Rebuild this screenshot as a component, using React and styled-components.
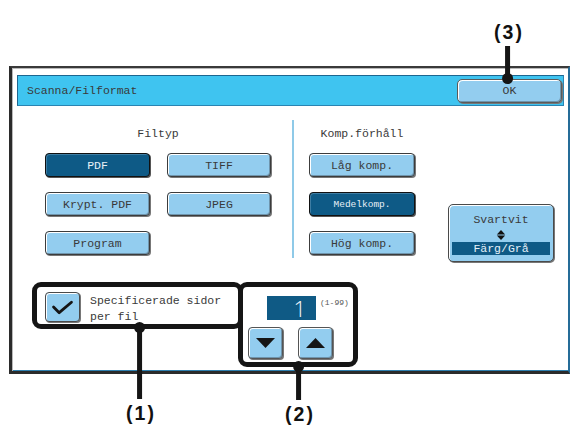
import React from "react";
import styled, { createGlobalStyle } from "styled-components";

const GlobalStyle = createGlobalStyle`
  body {
    margin: 0;
    background: #ffffff;
  }
`;

const mono = `"Liberation Mono", "DejaVu Sans Mono", monospace`;

const Page = styled.div`
  width: 571px;
  height: 427px;
  box-sizing: border-box;
  padding: 66px 1px 0 9px;
  overflow: hidden;
  font-family: ${mono};
`;

const Frame = styled.div`
  position: relative;
  width: 561px;
  height: 308px;
  box-sizing: border-box;
  border-top: 2px solid #3a3a3a;
  border-left: 3px solid #2b2b2b;
  border-right: 2px solid #256c98;
  border-bottom: 3px solid #2b2b2b;
  box-shadow: inset 1px 1px 0 #b9b9b9, inset 0 -1px 0 #2e7fae;
  background: #fff;
`;

const Header = styled.div`
  margin: 7px 4px 0 5px;
  height: 31px;
  box-sizing: border-box;
  display: flex;
  align-items: center;
  justify-content: space-between;
  background: #3fc4f0;
  border: 1px solid #2a84b2;
  border-top-color: #1d6690;
  border-left-color: #1d6690;
`;

const Title = styled.span`
  padding-left: 9px;
  font-size: 11.5px;
  color: #3a3a3a;
`;

const Key = styled.div`
  position: relative;
  box-sizing: border-box;
  width: ${(p) => p.$w || 105}px;
  height: ${(p) => p.$h || 24}px;
  display: flex;
  align-items: center;
  justify-content: center;
  border-radius: 4px;
  font-family: ${mono};
  font-size: ${(p) => p.$fs || 11.5}px;
  border: 1px solid ${(p) => (p.$on ? "#111" : "#3c3c3c")};
  background: ${(p) => (p.$on ? "#0e5a86" : "#93cdef")};
  color: ${(p) => (p.$on ? "#e8f0f6" : "#3a3a3a")};
  box-shadow: ${(p) =>
    p.$on
      ? "inset 1px 1px 0 #3e7da3, 1px 1px 0 #555"
      : "inset 1px 1px 0 #ffffff, inset -1px -1px 0 #6f95ad, 1px 1px 0 #777"};
`;

const OkKey = styled(Key)`
  margin-right: 1px;
  border-color: #5a5a5a;
  border-radius: 5px;
`;

const Body = styled.div`
  display: flex;
  align-items: flex-start;
  margin-top: 14px;
  padding-left: 33px;
`;

const Column = styled.div`
  display: flex;
  flex-direction: column;
  align-items: center;
  width: ${(p) => p.$w}px;
  margin-left: ${(p) => p.$ml || 0}px;
  padding-top: 7px;
`;

const Label = styled.div`
  font-size: 11.5px;
  line-height: 14px;
  color: #3a3a3a;
  margin-bottom: 12px;
`;

const TypeGrid = styled.div`
  display: grid;
  grid-template-columns: 105px 104px;
  grid-auto-rows: 24px;
  column-gap: 17px;
  row-gap: 15px;
`;

const KeyStack = styled.div`
  display: flex;
  flex-direction: column;
  gap: 15px;
`;

const Divider = styled.div`
  width: 2px;
  height: 138px;
  margin-left: 21px;
  background: #8fcae8;
`;

const ToggleKey = styled.div`
  box-sizing: border-box;
  width: 106px;
  height: 58px;
  margin: 84px 0 0 33px;
  padding: 3px 3px 6px;
  display: flex;
  flex-direction: column;
  align-items: stretch;
  border: 1px solid #4a4a4a;
  border-radius: 5px;
  background: #93cdef;
  box-shadow: inset 1px 1px 0 #fff, 1px 1px 0 #777;
  font-size: 11.5px;
  color: #3a3a3a;
`;

const ToggleTop = styled.div`
  text-align: center;
  line-height: 14px;
  margin-top: 5px;
`;

const ToggleArrows = styled.svg`
  display: block;
  margin: 3px auto 2px;
`;

const ToggleBand = styled.div`
  background: #0e5a86;
  color: #e4f0f8;
  text-align: center;
  line-height: 13px;
  height: 13px;
`;

const BottomRow = styled.div`
  display: flex;
  align-items: flex-start;
  margin-top: 20px;
  padding-left: 20px;
`;

const CalloutBox = styled.div`
  position: relative;
  box-sizing: border-box;
  width: ${(p) => p.$w}px;
  height: ${(p) => p.$h}px;
  margin-left: ${(p) => p.$ml || 0}px;
  border: 5px solid #151515;
  border-radius: 9px;
  background: #fff;
`;

const CheckRow = styled.div`
  display: flex;
  align-items: flex-start;
  gap: 10px;
  padding: 5px 0 0 8px;
`;

const CheckBox = styled.div`
  box-sizing: border-box;
  width: 35px;
  height: 30px;
  border: 1px solid #4a4a4a;
  border-radius: 4px;
  background: #93cdef;
  box-shadow: inset 1px 1px 0 #fff, 1px 1px 0 #777;
  display: flex;
  align-items: center;
  justify-content: center;
`;

const CheckText = styled.div`
  font-size: 11.5px;
  line-height: 16px;
  color: #3a3a3a;
  padding-top: 1px;
`;

const Spinner = styled.div`
  display: flex;
  flex-direction: column;
  padding: 9px 0 0 5px;
  gap: 7px;
`;

const ValueRow = styled.div`
  display: flex;
  align-items: flex-start;
  padding-left: 19px;
  gap: 4px;
`;

const ValueField = styled.div`
  box-sizing: border-box;
  width: 49px;
  height: 24px;
  background: #0f5a85;
  color: #f2f6fa;
  font-family: "Open Sans", "Liberation Sans", sans-serif;
  font-weight: 300;
  font-size: 22px;
  line-height: 24px;
  text-align: right;
  padding-right: 10px;
`;

const Range = styled.span`
  font-size: 8px;
  color: #555;
  margin-top: 2px;
`;

const ArrowRow = styled.div`
  display: flex;
  gap: 15px;
`;

const ArrowKey = styled(Key)`
  border-color: #555;
`;

const Marker = styled.div`
  position: absolute;
  left: ${(p) => p.$x}px;
  ${(p) => (p.$up ? `bottom: ${p.$y}px;` : `top: ${p.$y}px;`)}
  transform: translateX(-50%);
  display: flex;
  flex-direction: ${(p) => (p.$up ? "column-reverse" : "column")};
  align-items: center;
  z-index: 2;
`;

const Dot = styled.span`
  width: 11px;
  height: 11px;
  border-radius: 50%;
  background: #151515;
`;

const Stem = styled.span`
  width: 5px;
  height: ${(p) => p.$len}px;
  background: #151515;
  margin: -2px 0;
`;

const CalloutNum = styled.span`
  font-family: "Liberation Sans", Arial, sans-serif;
  font-weight: bold;
  font-size: 19.5px;
  line-height: 20px;
  letter-spacing: 2px;
  padding-left: 2px;
  color: #111;
  margin: ${(p) => (p.$up ? "0 0 6px" : "6px 0 0")};
`;

const Callout = ({ x, y, len, up, n }) => (
  <Marker $x={x} $y={y} $up={up}>
    <Dot />
    <Stem $len={len} />
    <CalloutNum $up={up}>({n})</CalloutNum>
  </Marker>
);

const fileTypes = [
  { label: "PDF", on: true },
  { label: "TIFF" },
  { label: "Krypt. PDF" },
  { label: "JPEG" },
  { label: "Program" },
];

const ratios = [
  { label: "Låg komp." },
  { label: "Medelkomp.", on: true, fs: 9.5 },
  { label: "Hög komp." },
];

const App = () => (
  <Page>
    <GlobalStyle />
    <Frame>
      <Header>
        <Title>Scanna/Filformat</Title>
        <OkKey>
          OK
          <Callout x={50} y={18} len={29} up n={3} />
        </OkKey>
      </Header>

      <Body>
        <Column $w={226}>
          <Label>Filtyp</Label>
          <TypeGrid>
            {fileTypes.map((t) => (
              <Key key={t.label} $on={t.on} $w={t.label === "TIFF" || t.label === "JPEG" ? 104 : 105}>
                {t.label}
              </Key>
            ))}
          </TypeGrid>
        </Column>
        <Divider />
        <Column $w={106} $ml={15}>
          <Label>Komp.förhåll</Label>
          <KeyStack>
            {ratios.map((r) => (
              <Key key={r.label} $on={r.on} $w={106} $fs={r.fs}>
                {r.label}
              </Key>
            ))}
          </KeyStack>
        </Column>
        <ToggleKey>
          <ToggleTop>Svartvit</ToggleTop>
          <ToggleArrows width="10" height="12" viewBox="0 0 10 12">
            <polygon points="0,5.5 5,0 10,5.5" fill="#111" />
            <polygon points="0,6.5 5,12 10,6.5" fill="#111" />
          </ToggleArrows>
          <ToggleBand>Färg/Grå</ToggleBand>
        </ToggleKey>
      </Body>

      <BottomRow>
        <CalloutBox $w={211} $h={47}>
          <CheckRow>
            <CheckBox>
              <svg width="35" height="30" viewBox="0 0 35 30">
                <polyline
                  points="8,15 14,21 27,10"
                  fill="none"
                  stroke="#151515"
                  strokeWidth="3"
                  strokeLinecap="round"
                  strokeLinejoin="round"
                />
              </svg>
            </CheckBox>
            <CheckText>
              Specificerade sidor
              <br />
              per fil
            </CheckText>
          </CheckRow>
          <Callout x={103} y={34.5} len={68} n={1} />
        </CalloutBox>

        <CalloutBox $w={120} $h={85} $ml={-5}>
          <Spinner>
            <ValueRow>
              <ValueField>1</ValueField>
              <Range>(1-99)</Range>
            </ValueRow>
            <ArrowRow>
              <ArrowKey $w={35} $h={32}>
                <svg width="19" height="10" viewBox="0 0 19 10">
                  <polygon points="0,0 19,0 9.5,10" fill="#151515" />
                </svg>
              </ArrowKey>
              <ArrowKey $w={35} $h={32}>
                <svg width="19" height="10" viewBox="0 0 19 10">
                  <polygon points="0,10 19,10 9.5,0" fill="#151515" />
                </svg>
              </ArrowKey>
            </ArrowRow>
          </Spinner>
          <Callout x={56} y={73.5} len={30} n={2} />
        </CalloutBox>
      </BottomRow>
    </Frame>
  </Page>
);

export default App;
